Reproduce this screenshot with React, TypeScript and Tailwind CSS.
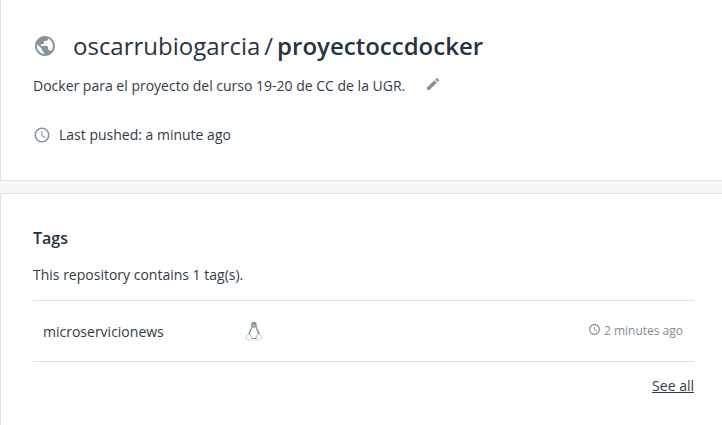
import { MdAccessTime, MdEdit, MdPublic } from "react-icons/md";

function LinuxIcon() {
  return (
    <svg width="18" height="20" viewBox="0 0 18 20" fill="none" className="mb-px block">
      <path d="M9 .7C6.900.7 6 2.200 6.200 4.200c.2 2.300-.4 3.200-1.500 5C3.800 10.800 3.200 12.300 3.500 14L7 18h4.500l3-4c.3-1.900-.4-3.400-1.300-4.900-1.100-1.700-1.600-2.500-1.500-4.900C11.800 2 11 .7 9 .7Z" fill="#84939d" />
      <path d="M7.300 6.200 9 6.900l1.600-.8c.3 2 1.600 3.800 2 5.600.4 2.100-.7 5.300-3.700 5.300-2.800 0-4.200-2.500-3.700-5 .4-2 1.900-3.600 2.100-5.800Z" fill="#fff" />
      <path d="M7.300 4.500 9 3.700l1.600.8L9 5.800Z" fill="#d2d8dc" />
      <path d="M3.600 13.200 1.100 15l.2 1.600-.4 1.300 4.600 1.300c1.300.1 2-.8 1.500-1.900L4.700 13.700ZM14.200 13.200l2.300 2.200.7 1.500-4 2.300c-1.300.4-2.100-.4-1.800-1.700l.7-3.800Z" fill="#fff" stroke="#a5b0b8" strokeWidth=".6" />
    </svg>
  );
}

export default function App() {
  return (
    <main className="flex h-[425px] w-[722px] flex-col overflow-hidden bg-[#f7f8fa] font-['Open_Sans',sans-serif] text-sm leading-5 text-[#303c46]">
      <section className="h-[181px] shrink-0 border-b border-l border-[#e0e1e3] bg-white pl-8">
        <div className="flex h-[68px] items-end">
          <div className="flex h-11 items-center">
            <MdPublic className="mr-4 size-6 text-[#8393a0]" />
            <h1 className="flex text-2xl leading-8 whitespace-nowrap text-[#27343f]">
              <span>oscarrubiogarcia</span>
              <span className="mx-1">/</span>
              <span className="font-semibold">proyectoccdocker</span>
            </h1>
          </div>
        </div>
        <div className="mt-2 flex h-5 items-center">
          <p>Docker para el proyecto del curso 19-20 de CC de la UGR.</p>
          <MdEdit className="mb-1 ml-5 size-4 text-[#8393a0]" />
        </div>
        <div className="mt-[29px] flex h-5 items-center">
          <MdAccessTime className="mr-2 size-[18px] text-[#8393a0]" />
          <span>Last pushed: a minute ago</span>
        </div>
      </section>

      <section className="mt-3 grow border-t border-l border-[#e0e1e3] bg-white pr-7 pl-8 pt-8">
        <h2 className="text-base leading-6 font-semibold text-[#27343f]">Tags</h2>
        <p className="mt-[15px]">This repository contains 1 tag(s).</p>
        <div className="mt-[15px] flex h-[62px] items-center border-y border-[#dfe1e3] pr-[11px] pl-2.5">
          <span className="w-[202px] pt-0.5">microservicionews</span>
          <LinuxIcon />
          <span className="ml-auto flex items-center text-xs text-[#7f8e99]">
            <MdAccessTime className="mr-[3px] mb-[3px] size-[13px]" />
            2 minutes ago
          </span>
        </div>
        <div className="mt-3.5 flex justify-end">
          <a className="underline">See all</a>
        </div>
      </section>
    </main>
  );
}
